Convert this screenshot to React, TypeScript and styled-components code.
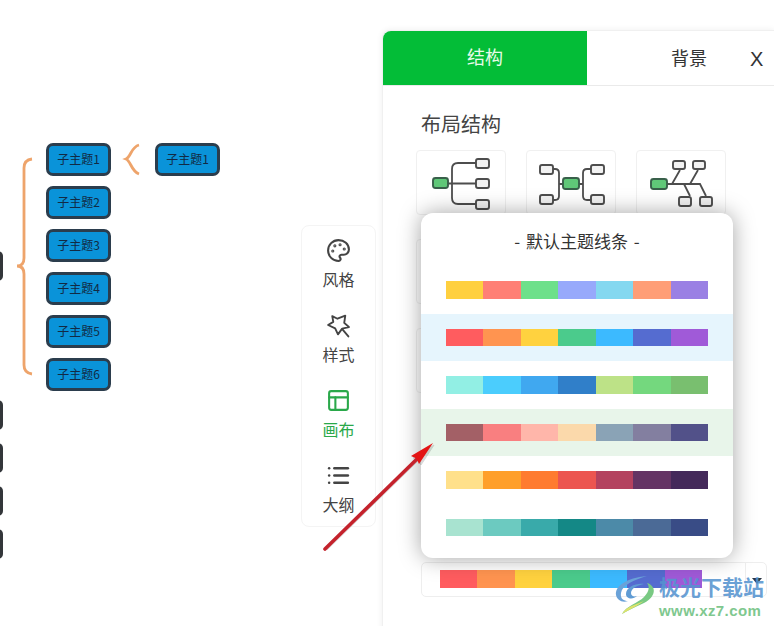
import React from "react";
import styled, { createGlobalStyle } from "styled-components";
import { Palette, PanelsTopLeft, List } from "lucide-react";

const CJK = `"Noto Sans CJK SC", "Noto Sans", "Liberation Sans", sans-serif`;

const Global = createGlobalStyle`
  html, body { margin: 0; padding: 0; background: #fff; }
  * { box-sizing: border-box; }
  body { font-family: ${CJK}; }
`;

const Stage = styled.div`
  position: relative;
  width: 774px;
  height: 626px;
  overflow: hidden;
  display: flex;
  background: #fff;
`;

/* ---------- mind map canvas ---------- */
const Canvas = styled.div`
  position: relative;
  width: 301px;
  flex: none;
`;
const Topic = styled.div<{ $x: number; $y: number }>`
  position: absolute;
  left: ${(p) => p.$x}px;
  top: ${(p) => p.$y}px;
  width: 65px;
  height: 33px;
  border: 3px solid #2b3d4d;
  border-radius: 7px;
  background: #0a93d9;
  color: #122a44;
  font-size: 12px;
  line-height: 25px;
  text-align: center;
  white-space: nowrap;
`;
const ClippedTopic = styled.div<{ $y: number }>`
  position: absolute;
  left: -40px;
  top: ${(p) => p.$y}px;
  width: 43px;
  height: 30px;
  border-radius: 5px;
  background: #33363a;
`;
const Braces = styled.svg`
  position: absolute;
  left: 0;
  top: 0;
  width: 160px;
  height: 400px;
`;

/* ---------- side menu ---------- */
const SideMenu = styled.nav`
  flex: none;
  width: 75px;
  height: 302px;
  margin-top: 225px;
  padding-top: 12px;
  display: flex;
  flex-direction: column;
  gap: 22px;
  background: #fff;
  border: 1px solid #f4f4f4;
  border-radius: 8px;
`;
const MenuItem = styled.div<{ $active?: boolean }>`
  display: flex;
  flex-direction: column;
  align-items: center;
  gap: 5px;
  color: ${(p) => (p.$active ? "#2aa84a" : "#444")};
  font-size: 16px;
  line-height: 22px;
  height: 53px;
  svg { display: block; flex: none; }
`;

/* ---------- right panel ---------- */
const Panel = styled.section`
  position: relative;
  flex: none;
  width: 392px;
  height: 640px;
  margin: 30px 0 0 6px;
  background: #fff;
  border-top: 1px solid #f0f0f0;
  border-left: 1px solid #f0f0f0;
  border-top-left-radius: 8px;
  box-shadow: 0 0 6px rgba(0, 0, 0, 0.07);
`;
const Tabs = styled.div`
  display: grid;
  grid-template-columns: 204px 204px;
  height: 55px;
  border-bottom: 1px solid #eaeaea;
  overflow: hidden;
`;
const Tab = styled.div<{ $active?: boolean }>`
  height: 54px;
  display: flex;
  align-items: center;
  justify-content: center;
  padding-bottom: ${(p) => (p.$active ? "4px" : "2px")};
  font-size: 18px;
  background: ${(p) => (p.$active ? "#03bd37" : "#fff")};
  color: ${(p) => (p.$active ? "#e6fbe9" : "#333")};
  border-top-left-radius: ${(p) => (p.$active ? "8px" : "0")};
`;
const Close = styled.div`
  position: absolute;
  left: 367px;
  top: 17px;
  font: 20px/22px "Liberation Sans", sans-serif;
  color: #333;
`;
const Body = styled.div`
  padding: 24px 0 0 33px;
`;
const Heading = styled.h2`
  margin: 0 0 12px 5px;
  font-size: 20px;
  font-weight: 400;
  line-height: 28px;
  color: #444;
`;
const CardGrid = styled.div`
  display: grid;
  grid-template-columns: repeat(3, 90px);
  grid-auto-rows: 65px;
  gap: 24px 20px;
`;
const Card = styled.div`
  border: 1px solid #f0f0f0;
  border-radius: 4px;
  background: #fff;
`;
const Thumb = styled.svg`
  display: block;
  margin: -1px;
  width: 90px;
  height: 65px;
`;
const SelectBox = styled.div`
  position: absolute;
  left: 38px;
  top: 531px;
  width: 346px;
  height: 35px;
  padding: 7px 0 0 18px;
  border: 1px solid #eee;
  border-radius: 5px;
  background: #fff;
`;
const SelectSplit = styled.span`
  position: absolute;
  left: 323px;
  top: 0;
  bottom: 0;
  width: 22px;
  border-left: 1px solid #eee;
  display: flex;
  align-items: center;
  justify-content: center;
  &::after {
    content: "";
    margin-top: 2px;
    border-left: 5px solid transparent;
    border-right: 5px solid transparent;
    border-top: 6px solid #2a3644;
  }
`;

/* ---------- popup ---------- */
const Popup = styled.div`
  position: absolute;
  left: 38px;
  top: 182px;
  width: 312px;
  height: 345px;
  background: #fff;
  border-radius: 12px;
  box-shadow: 0 0 22px rgba(0, 0, 0, 0.36);
  overflow: hidden;
`;
const PopupTitle = styled.div`
  height: 53px;
  padding-top: 15px;
  font-size: 17px;
  line-height: 26px;
  word-spacing: 2px;
  text-align: center;
  color: #333;
`;
const Bar = styled.div`
  display: flex;
  width: 262px;
  height: 18px;
`;
const ThemeRow = styled.div<{ $band?: string; $thin: boolean }>`
  height: 47.5px;
  padding: ${(p) => (p.$thin ? "15.5px" : "15px")} 0 0 25px;
  background: ${(p) => p.$band ?? "transparent"};
  ${Bar} {
    height: ${(p) => (p.$thin ? "17px" : "18px")};
  }
`;
const Swatch = styled.span<{ $c: string }>`
  flex: 1;
  background: ${(p) => p.$c};
`;

/* ---------- overlays ---------- */
const ArrowLayer = styled.svg`
  position: absolute;
  left: 315px;
  top: 435px;
  width: 125px;
  height: 125px;
  pointer-events: none;
`;
const Watermark = styled.div`
  position: absolute;
  left: 614px;
  top: 573px;
  width: 155px;
  height: 46px;
  display: flex;
  gap: 3px;
  pointer-events: none;
`;
const WatermarkText = styled.div`
  display: flex;
  flex-direction: column;
`;
const WatermarkName = styled.span`
  height: 29px;
  font-size: 21px;
  font-weight: 700;
  line-height: 26px;
  color: rgba(86, 148, 208, 0.88);
  white-space: nowrap;
`;
const WatermarkUrl = styled.span`
  font: 700 15px/17px "Liberation Sans", sans-serif;
  letter-spacing: 0.4px;
  color: #7fc88f;
  white-space: nowrap;
`;

const THEMES: { colors: string[]; band?: string }[] = [
  { colors: ["#ffd03f", "#ff7f75", "#6de08a", "#97a9fb", "#84d8f0", "#ff9e77", "#9a80e4"] },
  { colors: ["#ff5c5f", "#ff9450", "#ffd23f", "#4bcb8c", "#3cbaff", "#556cd0", "#a05ad8"], band: "#e6f5fd" },
  { colors: ["#92efe4", "#4bcdfd", "#40a8f0", "#307fc9", "#bde287", "#74d87e", "#79bf6f"] },
  { colors: ["#a36066", "#f97f80", "#ffb6aa", "#fbd9ab", "#8aa3b6", "#837fa0", "#525189"], band: "#e8f5ea" },
  { colors: ["#ffe08a", "#ff9f2a", "#ff7b30", "#ec5550", "#b4425f", "#643464", "#44295a"] },
  { colors: ["#a8e3d0", "#6ccac0", "#39aaaa", "#148886", "#4c8aa8", "#4b6a96", "#394c86"] },
];

const ColorBar = ({ colors }: { colors: string[] }) => (
  <Bar>
    {colors.map((c) => (
      <Swatch key={c} $c={c} />
    ))}
  </Bar>
);

const Small = ({ x, y, w = 13, h = 9 }: { x: number; y: number; w?: number; h?: number }) => (
  <rect x={x} y={y} width={w} height={h} rx="2" fill="#f2f2f2" stroke="#4d4d4d" strokeWidth="1.9" />
);
const Root = ({ x, y, w = 15, h = 10 }: { x: number; y: number; w?: number; h?: number }) => (
  <rect x={x} y={y} width={w} height={h} rx="2.5" fill="#5fc878" stroke="#38604a" strokeWidth="1.9" />
);
const LINE = { fill: "none", stroke: "#4d4d4d", strokeWidth: 1.8 };

const WandStar = () => (
  <svg width="25" height="25" viewBox="0 0 24 24" fill="none" stroke="#444" strokeWidth="1.8" strokeLinejoin="round" strokeLinecap="round">
    <path d="M6 3 L11 5.5 L18.5 2.5 L17.5 9.5 L22 13.5 L15.5 15 L11.5 20.5 L8.8 14.8 L2 11.5 L7 8.5 Z" />
    <path d="M16 16 L21.5 22.5" />
  </svg>
);

export default function App() {
  return (
    <Stage>
      <Global />
      <Canvas>
        <Braces viewBox="0 0 160 400">
          <path
            d="M32 159 Q24 160 24 168 L24 258 Q24 266 17 266 Q24 266 24 274 L24 365 Q24 373 32 374"
            fill="none"
            stroke="#eea46b"
            strokeWidth="2.8"
          />
          <path d="M139 145 C131 147 131 157 126 159 C131 161 131 171 139 174" fill="none" stroke="#eea46b" strokeWidth="2.8" />
        </Braces>
        {[1, 2, 3, 4, 5, 6].map((n, i) => (
          <Topic key={n} $x={46} $y={143 + i * 43}>
            子主题{n}
          </Topic>
        ))}
        <Topic $x={155} $y={143}>
          子主题1
        </Topic>
        {[251, 400, 443, 486, 529].map((y) => (
          <ClippedTopic key={y} $y={y} />
        ))}
      </Canvas>

      <SideMenu>
        <MenuItem>
          <Palette size={25} strokeWidth={2} />
          风格
        </MenuItem>
        <MenuItem>
          <WandStar />
          样式
        </MenuItem>
        <MenuItem $active>
          <PanelsTopLeft size={25} strokeWidth={2} />
          画布
        </MenuItem>
        <MenuItem>
          <List size={25} strokeWidth={2.4} />
          大纲
        </MenuItem>
      </SideMenu>

      <Panel>
        <Tabs>
          <Tab $active>结构</Tab>
          <Tab>背景</Tab>
        </Tabs>
        <Close>X</Close>
        <Body>
          <Heading>布局结构</Heading>
          <CardGrid>
            <Card>
              <Thumb viewBox="0 0 90 65">
                <path d="M32 33.5 H60 M60 13 H42 Q36 13 36 19 V48 Q36 54 42 54 H60" {...LINE} />
                <Root x={17} y={28} />
                <Small x={60} y={9} />
                <Small x={60} y={29} />
                <Small x={60} y={50} />
              </Thumb>
            </Card>
            <Card>
              <Thumb viewBox="0 0 90 65">
                <path d="M27 19 H29 Q33 19 33 23 V46 Q33 50 29 50 H27 M33 34 H37 M53 34 H57 M65 19 H61 Q57 19 57 23 V46 Q57 50 61 50 H65" {...LINE} />
                <Root x={37} y={28} w={16} h={11} />
                <Small x={14} y={15} />
                <Small x={14} y={45} />
                <Small x={65} y={15} />
                <Small x={65} y={45} />
              </Thumb>
            </Card>
            <Card>
              <Thumb viewBox="0 0 90 65">
                <path d="M31 34 H64 L70 46 M36 34 L44 20 M54 34 L62 20 M48 34 L54 46" {...LINE} />
                <Root x={15} y={29} w={16} />
                <Small x={37} y={11} w={12} h={8} />
                <Small x={57} y={11} w={12} h={8} />
                <Small x={43} y={47} w={12} />
                <Small x={64} y={47} w={12} />
              </Thumb>
            </Card>
            {[0, 1, 2, 3, 4, 5].map((i) => (
              <Card key={i} />
            ))}
          </CardGrid>
        </Body>
        <SelectBox>
          <ColorBar colors={THEMES[1].colors} />
          <SelectSplit />
        </SelectBox>
        <Popup>
          <PopupTitle>- 默认主题线条 -</PopupTitle>
          {THEMES.map((t, i) => (
            <ThemeRow key={t.colors[0]} $band={t.band} $thin={i % 2 === 1}>
              <ColorBar colors={t.colors} />
            </ThemeRow>
          ))}
        </Popup>
      </Panel>

      <ArrowLayer viewBox="0 0 125 125">
        <path d="M12 115 L104 25 M119 10 L98 23 L103 25 L106 30 Z" fill="#666" stroke="#666" strokeWidth="1" opacity="0.25" />
        <path d="M10 114 L102 24" stroke="#c4222c" strokeWidth="3.6" strokeLinecap="round" />
        <path d="M118 8 L96 21 L101.5 23.5 L104 29 Z" fill="#e31414" />
      </ArrowLayer>

      <Watermark>
        <svg width="42" height="42" viewBox="0 0 42 42">
          <path d="M2 22 C1 13 12 5 33 3 C20 7 8 12 7 20 C6 26 10 28 14 28 C8 30 3 27 2 22 Z" fill="#6aa2d8" />
          <path d="M12 21 C12 14 22 10 30 11 C24 12 17 15 17 20 C17 23 20 24 23 23 C19 27 12 26 12 21 Z" fill="#5f9bd4" />
          <path d="M33 10 C43 13 42 24 30 30 C22 34 14 37 8 41 C12 33 24 30 30 24 C35 19 36 14 33 10 Z" fill="#79c983" />
          <path d="M30 28 C22 34 14 37 8 41 C10 37 14 34 20 32 Z" fill="#dfe36a" />
        </svg>
        <WatermarkText>
          <WatermarkName>极光下载站</WatermarkName>
          <WatermarkUrl>www.xz7.com</WatermarkUrl>
        </WatermarkText>
      </Watermark>
    </Stage>
  );
}
